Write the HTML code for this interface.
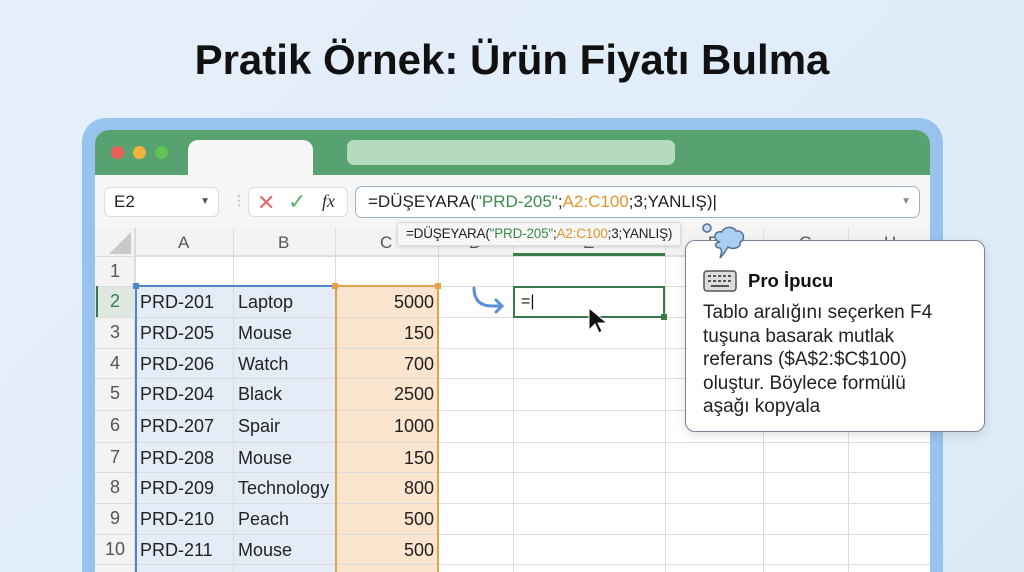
<!DOCTYPE html><html><head><meta charset="utf-8"><style>
*{margin:0;padding:0;box-sizing:border-box}
html,body{width:1024px;height:572px;overflow:hidden}
body{background:linear-gradient(135deg,#e6f0fb,#dceaf8);font-family:"Liberation Sans","DejaVu Sans",sans-serif;position:relative}
.a{position:absolute}
h1{position:absolute;top:36px;left:0;width:1024px;text-align:center;font-size:42px;font-weight:bold;color:#111;letter-spacing:0px}
.frame{left:82px;top:118px;width:861px;height:454px;border-radius:24px 24px 0 0;background:#98c3ee}
.win{left:95px;top:130px;width:835px;height:442px;border-radius:14px 14px 0 0;background:#f6f6f5;overflow:hidden}
.tb{left:0;top:0;width:835px;height:45px;background:#58a271}
.dot{width:13px;height:13px;border-radius:50%;top:16px}
.cell{position:absolute;font-size:18px;color:#222;line-height:30px;white-space:nowrap}
.hl{position:absolute;background:#dcdcdc}
</style></head><body>
<h1>Pratik Örnek: Ürün Fiyatı Bulma</h1>
<div class="a frame"></div>
<div class="a win">
 <div class="a tb"></div>
 <div class="a dot" style="left:16px;background:#ec5f57"></div>
 <div class="a dot" style="left:38px;background:#f2b33e"></div>
 <div class="a dot" style="left:60px;background:#5fc452"></div>
 <div class="a" style="left:93px;top:10px;width:125px;height:36px;background:#f6f6f5;border-radius:10px 10px 0 0"></div>
 <div class="a" style="left:252px;top:10px;width:328px;height:25px;background:#b4dbbd;border-radius:7px"></div>
 <div class="a" style="left:9px;top:57px;width:115px;height:30px;background:#fff;border:1px solid #ddd;border-radius:6px;font-size:17px;line-height:28px;padding-left:9px;color:#222">E2<span style="position:absolute;right:8px;top:0;font-size:10px;color:#555">▼</span></div>
 <div class="a" style="left:137px;top:62px;color:#aaa;font-size:14px">⋮</div>
 <div class="a" style="left:153px;top:57px;width:100px;height:30px;background:#fff;border:1px solid #ddd;border-radius:6px"></div>
 <div class="a" style="left:162px;top:60px;font-size:22px;color:#e06a6a">✕</div>
 <div class="a" style="left:193px;top:59px;font-size:22px;color:#5cb56b">✓</div>
 <div class="a" style="left:227px;top:61px;font-size:18px;font-style:italic;font-family:'Liberation Serif',serif;color:#333">fx</div>
 <div class="a" style="left:260px;top:56px;width:565px;height:32px;background:#fff;border:1px solid #9ab3cf;border-radius:7px;font-size:17px;line-height:30px;padding-left:12px;color:#222;white-space:nowrap">=DÜŞEYARA(<span style="color:#3a8a4a">"PRD-205"</span>;<span style="color:#e1962e">A2:C100</span>;3;YANLIŞ)|<span style="position:absolute;right:8px;top:0;font-size:10px;color:#888">▼</span></div>
 <div class="a" style="left:0;top:98px;width:835px;height:362px;background:#fff"></div>
 <div class="a" style="left:0;top:98px;width:835px;height:28px;background:#f3f3f3;border-bottom:1px solid #ddd"></div>
 <div class="a" style="left:0;top:98px;width:40px;height:362px;background:#f3f3f3;border-right:1px solid #ddd"></div>
 <div class="a" style="left:0;top:156px;width:40px;height:31px;background:#dfe9e1"></div>
 <div class="a" style="left:14px;top:102px;width:0;height:0;border-left:22px solid transparent;border-bottom:22px solid #c9c9c9"></div>
 <div class="a" style="left:40px;top:156px;width:200px;height:304px;background:#e4ecf7"></div>
 <div class="a" style="left:240px;top:156px;width:103px;height:304px;background:#fbe5cf"></div>
</div>
<div id="g"></div>
<script>
var g=document.getElementById('g'),h='';
var cols=[135,233,335,438,513,665,763,848];
cols.forEach(function(x){h+='<div class="hl" style="left:'+x+'px;top:228px;width:1px;height:344px"></div>'});
var rows=[256,286,317,348,378,410,442,472,503,534,564];
rows.forEach(function(y){h+='<div class="hl" style="left:95px;top:'+y+'px;width:835px;height:1px"></div>'});
var L=['A','B','C','D','E','F','G','H'],cx=[184,284,386,475,589,714,805,890];
L.forEach(function(l,i){h+='<div class="cell" style="left:'+(cx[i]-6)+'px;top:228px;color:#555;font-size:17px">'+l+'</div>'});
var d=[['PRD-201','Laptop',5000],['PRD-205','Mouse',150],['PRD-206','Watch',700],['PRD-204','Black',2500],['PRD-207','Spair',1000],['PRD-208','Mouse',150],['PRD-209','Technology',800],['PRD-210','Peach',500],['PRD-211','Mouse',500]];
for(var r=0;r<10;r++){var y=rows[r];h+='<div class="cell" style="left:95px;width:40px;text-align:center;top:'+(y)+'px;color:'+(r==1?'#3a7a4a':'#555')+'">'+(r+1)+'</div>';
 if(r>0){var e=d[r-1];h+='<div class="cell" style="left:140px;top:'+(y+1)+'px">'+e[0]+'</div><div class="cell" style="left:238px;top:'+(y+1)+'px">'+e[1]+'</div><div class="cell" style="left:335px;width:99px;text-align:right;top:'+(y+1)+'px">'+e[2]+'</div>';}}
g.innerHTML=h;
</script>
<div class="a" style="left:135px;top:285px;width:200px;height:2px;background:#4f86c6"></div>
<div class="a" style="left:135px;top:285px;width:2px;height:287px;background:#4f86c6"></div>
<div class="a" style="left:133px;top:283px;width:6px;height:6px;background:#4f86c6"></div>
<div class="a" style="left:335px;top:285px;width:104px;height:287px;border:2px solid #e3a14c;border-bottom:none"></div>
<div class="a" style="left:332px;top:283px;width:6px;height:6px;background:#e3a14c"></div>
<div class="a" style="left:435px;top:283px;width:6px;height:6px;background:#e3a14c"></div>
<div class="a" style="left:96px;top:286px;width:2px;height:31px;background:#3a7a4a"></div>
<div class="a" style="left:513px;top:253px;width:152px;height:3px;background:#3a7a4a"></div>
<div class="a" style="left:513px;top:286px;width:152px;height:32px;border:2px solid #3a7a4a;font-size:16px;line-height:28px;padding-left:6px;color:#111">=|</div>
<div class="a" style="left:661px;top:314px;width:6px;height:6px;background:#3a7a4a"></div>
<svg class="a" style="left:470px;top:286px" width="36" height="28"><path d="M4 2 Q4 20 22 20 L32 20 M26 14 L32 20 L26 26" fill="none" stroke="#5b8fd6" stroke-width="3" stroke-linecap="round"/></svg>
<svg class="a" style="left:587px;top:306px" width="24" height="30"><path d="M2 2 L2 24 L8 18 L12 27 L15 25 L11 17 L20 17 Z" fill="#111" stroke="#fff" stroke-width="1"/></svg>
<div class="a" style="left:397px;top:222px;width:284px;height:24px;background:#f6f6f6;border:1px solid #ddd;border-radius:3px;box-shadow:0 1px 3px rgba(0,0,0,.15);font-size:13.5px;line-height:22px;padding-left:8px;color:#222;white-space:nowrap;letter-spacing:-0.2px">=DÜŞEYARA(<span style="color:#3a8a4a">"PRD-205"</span>;<span style="color:#e1962e">A2:C100</span>;3;YANLIŞ)</div>
<div class="a" style="left:685px;top:240px;width:300px;height:192px;background:#fff;border:1.5px solid #7a8595;border-radius:10px;box-shadow:0 3px 10px rgba(0,0,0,.12)"></div>
<svg class="a" style="left:698px;top:220px" width="52" height="44"><circle cx="9" cy="8" r="4" fill="#c5dcf5" stroke="#56708f" stroke-width="1.5"/><path d="M22 22 C14 20 16 10 24 12 C26 6 36 6 38 11 C46 10 48 20 42 22 C44 28 34 30 30 27 C28 30 26 34 22 38 C24 32 24 30 22 28 C16 28 16 22 22 22 Z" fill="#a9cff3" stroke="#56708f" stroke-width="1.5"/></svg>
<svg class="a" style="left:703px;top:270px" width="34" height="22"><rect x="1" y="1" width="32" height="20" rx="3" fill="#ddd" stroke="#555" stroke-width="1.5"/><g fill="#555"><rect x="5" y="5" width="3" height="2"/><rect x="10" y="5" width="3" height="2"/><rect x="15" y="5" width="3" height="2"/><rect x="20" y="5" width="3" height="2"/><rect x="25" y="5" width="3" height="2"/><rect x="5" y="10" width="3" height="2"/><rect x="10" y="10" width="3" height="2"/><rect x="15" y="10" width="3" height="2"/><rect x="20" y="10" width="3" height="2"/><rect x="25" y="10" width="3" height="2"/><rect x="8" y="15" width="18" height="2"/></g></svg>
<div class="a" style="left:748px;top:270px;font-size:18.5px;font-weight:bold;color:#111">Pro İpucu</div>
<div class="a" style="left:703px;top:301px;width:280px;font-size:19px;line-height:23.5px;color:#222;white-space:nowrap">Tablo aralığını seçerken F4<br>tuşuna basarak mutlak<br>referans ($A$2:$C$100)<br>oluştur. Böylece formülü<br>aşağı kopyala</div>
</body></html>
